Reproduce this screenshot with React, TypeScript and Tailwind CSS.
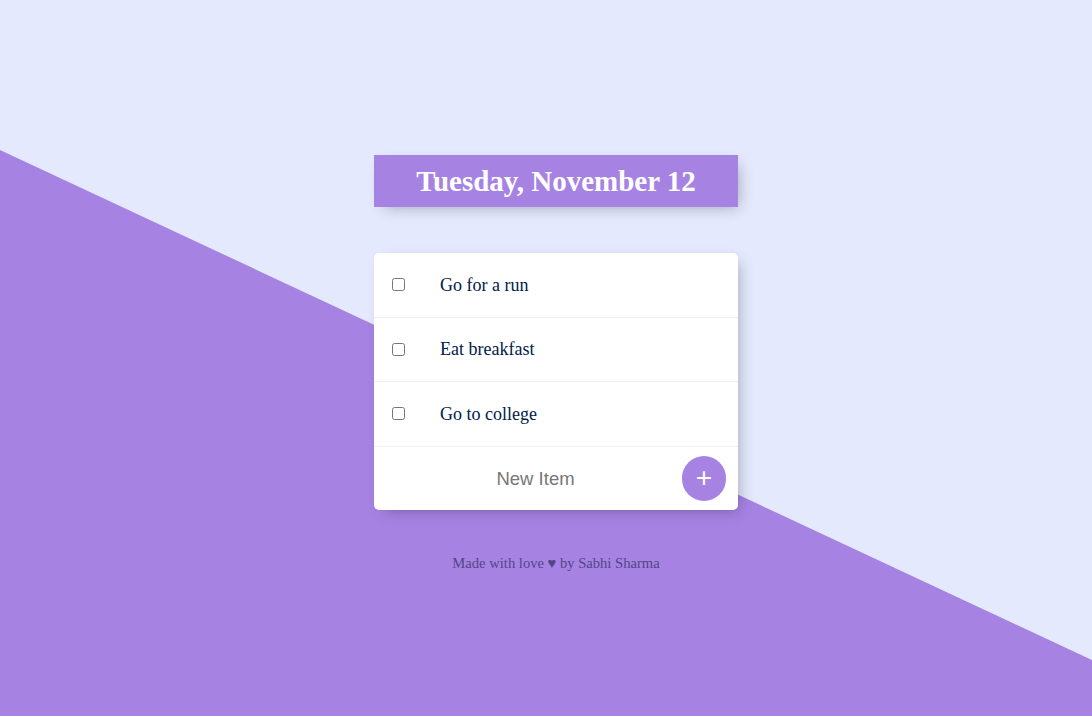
const items = ['Go for a run', 'Eat breakfast', 'Go to college'];

export default function App() {
  return (
    <div className="relative h-[716px] w-full overflow-hidden bg-[#e4e9fd] font-['Liberation_Serif',serif]">
      {/* diagonal backdrop */}
      <div className="absolute inset-0 bg-[#a683e3] [clip-path:polygon(0_150px,100%_660px,100%_100%,0_100%)]" />

      <div className="relative flex flex-col items-center pl-[20px] pt-[155px]">
        <div className="w-[364px] bg-[#a683e3] text-center shadow-[5px_5px_15px_-5px_rgba(0,0,0,0.3)]">
          <h1 className="p-[10px] text-[29px] font-bold leading-[32px] text-white">Tuesday, November 12</h1>
        </div>

        <div className="mt-[46px] w-[364px] rounded-[5px] bg-white shadow-[5px_5px_15px_-5px_rgba(0,0,0,0.3)]">
          {items.map((item) => (
            <div key={item} className="flex h-[64.5px] items-center border-b border-[#f1f1f1]">
              <input type="checkbox" className="ml-[18px] h-[13px] w-[13px]" />
              <p className="ml-[35px] pt-[1px] text-[18px] text-[#00204a]">{item}</p>
            </div>
          ))}
          <form className="flex h-[63px] items-center" onSubmit={(e) => e.preventDefault()}>
            <input
              type="text"
              placeholder="New Item"
              className="ml-[15px] w-[300px] bg-transparent pt-[1px] text-center font-['Liberation_Sans',sans-serif] text-[18.5px] text-[#333] outline-none placeholder:text-[#777]"
            />
            <button
              type="button"
              className="ml-auto mr-[12px] flex h-[45px] w-[45px] items-center justify-center rounded-full bg-[#a683e3] font-['Liberation_Sans',sans-serif] text-[28px] leading-none text-white"
            >
              +
            </button>
          </form>
        </div>

        <footer className="mt-[43px] text-[14.6px] text-[#534586]">Made with love ♥ by Sabhi Sharma</footer>
      </div>
    </div>
  );
}
